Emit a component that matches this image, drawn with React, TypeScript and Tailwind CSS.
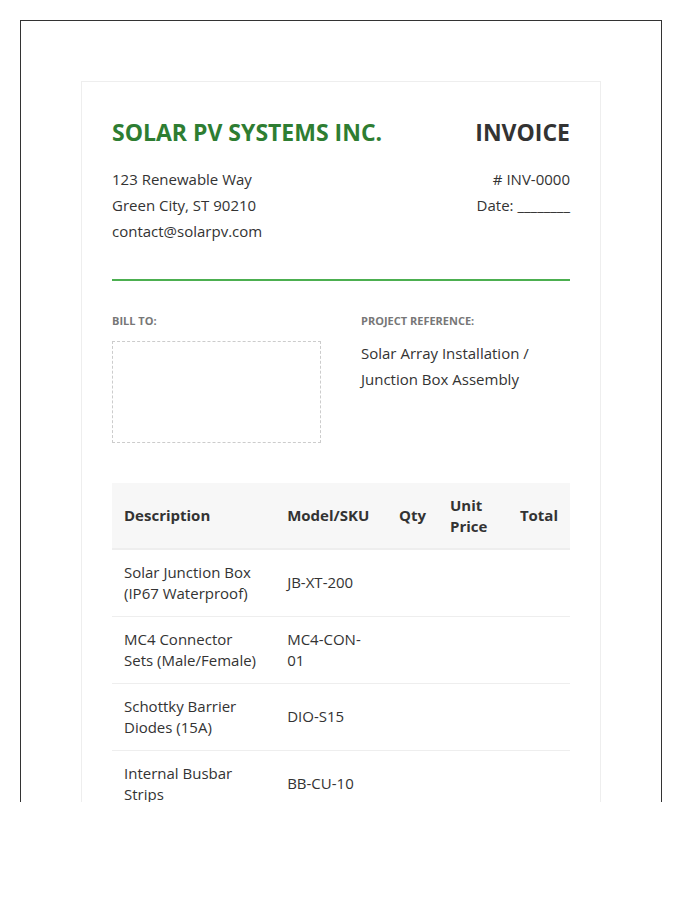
export default function App() {
  const rows = [
    ["Solar Junction Box (IP67 Waterproof)", "JB-XT-200"],
    ["MC4 Connector Sets (Male/Female)", "MC4-CON-01"],
    ["Schottky Barrier Diodes (15A)", "DIO-S15"],
    ["Internal Busbar Strips", "BB-CU-10"],
  ];
  return (
    <div className="bg-white p-[20px] h-[900px]" style={{ fontFamily: '"Open Sans", "Noto Sans", sans-serif' }}>
      <div className="border border-[#333] w-[642px] h-[782px] overflow-hidden p-[60px] border-b-0">
        <div className="border border-[#eee] px-[30px] pt-[34px] pb-10 text-[#333]">
          <div className="flex justify-between items-start">
            <div>
              <div className="text-[23px] font-bold text-[#2e7d32] leading-[32px]">SOLAR PV SYSTEMS INC.</div>
              <div className="mt-[18px] text-[15px] leading-[26px]">
                <div>123 Renewable Way</div>
                <div>Green City, ST 90210</div>
                <div>contact@solarpv.com</div>
              </div>
            </div>
            <div className="text-right">
              <div className="text-[23px] font-bold text-[#333] leading-[32px]">INVOICE</div>
              <div className="mt-[18px] text-[15px] leading-[26px]">
                <div># INV-0000</div>
                <div>Date: ________</div>
              </div>
            </div>
          </div>
          <div className="h-[2px] bg-[#4caf50] mt-[35px]"></div>
          <div className="flex gap-10 mt-[33px]">
            <div className="w-[209px]">
              <div className="text-[11px] font-bold text-[#777] uppercase leading-[14px]">Bill To:</div>
              <div className="mt-[13px] h-[102px] border border-dashed border-[#ccc]"></div>
            </div>
            <div className="flex-1">
              <div className="text-[11px] font-bold text-[#777] uppercase leading-[14px]">Project Reference:</div>
              <div className="mt-[12px] text-[15px] leading-[26px]">Solar Array Installation /<br />Junction Box Assembly</div>
            </div>
          </div>
          <table className="w-full mt-[40px] text-[15px] border-collapse">
            <thead>
              <tr className="bg-[#f7f7f7] border-b-2 border-[#eee]">
                <th className="text-left font-bold px-3 h-[66px] w-[164px] leading-[21px]">Description</th>
                <th className="text-left font-bold px-3 w-[112px] leading-[21px]">Model/SKU</th>
                <th className="text-left font-bold px-3 w-[51px] leading-[21px]">Qty</th>
                <th className="text-left font-bold px-3 w-[70px] leading-[21px]">Unit Price</th>
                <th className="text-left font-bold px-3 leading-[21px]">Total</th>
              </tr>
            </thead>
            <tbody>
              {rows.map((r) => (
                <tr key={r[1]} className="border-b border-[#eee]">
                  <td className="px-3 h-[67px] leading-[21px]">{r[0]}</td>
                  <td className="px-3 leading-[21px]">{r[1]}</td>
                  <td className="px-3"></td>
                  <td className="px-3"></td>
                  <td className="px-3"></td>
                </tr>
              ))}
            </tbody>
          </table>
        </div>
      </div>
    </div>
  );
}
